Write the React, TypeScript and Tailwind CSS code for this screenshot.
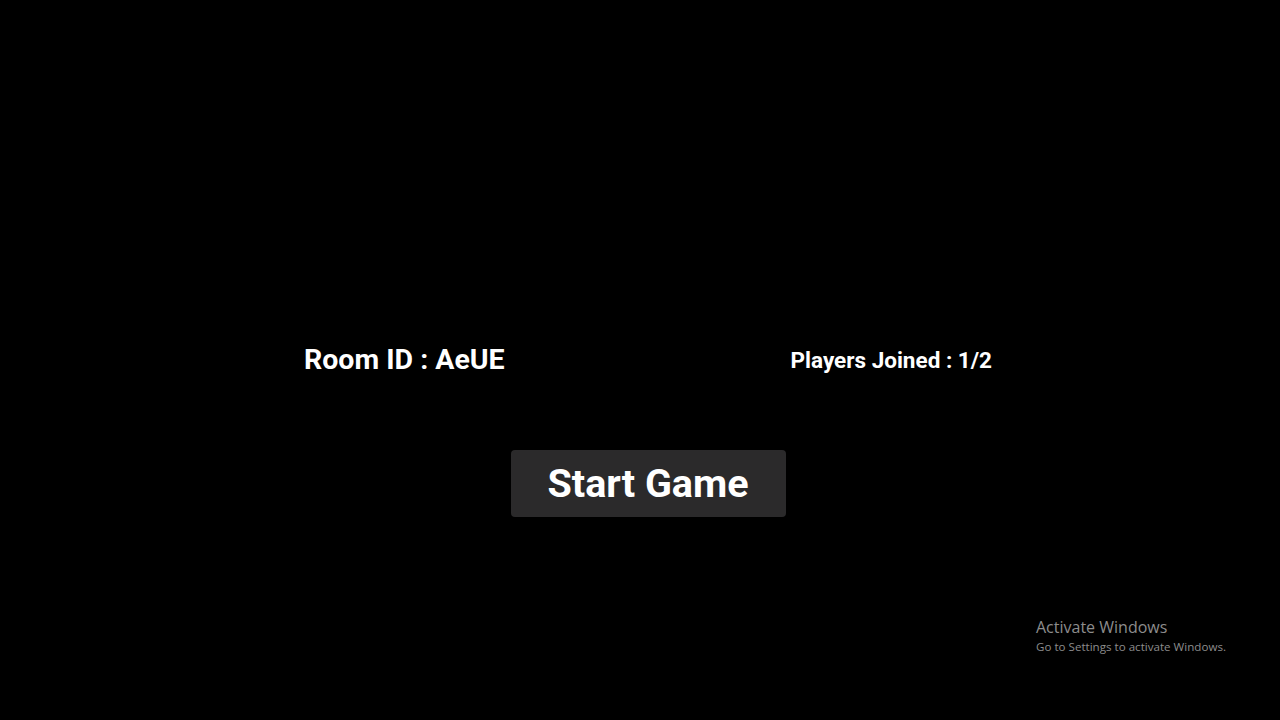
import React from "react";

export default function App() {
  return (
    <div className="relative w-full h-[720px] bg-black text-white font-['Roboto',sans-serif] overflow-hidden">
      <div className="flex flex-col items-center pt-[341px] pl-4">
        <div className="flex w-[688px] items-center justify-between">
          <h2 className="text-[28.5px] font-bold leading-[38px]">Room ID : AeUE</h2>
          <p className="text-[22.5px] font-bold leading-[38px]">Players Joined : 1/2</p>
        </div>
        <button
          type="button"
          className="mt-[71px] w-[275px] h-[67px] rounded bg-[#2b2a2b] text-[39.5px] font-bold text-white"
        >
          Start Game
        </button>
      </div>
      <div className="absolute left-[1036px] top-[616px] font-['Open_Sans',sans-serif] text-[#8c8c8c]">
        <p className="text-[16px] leading-[22px]">Activate Windows</p>
        <p className="text-[11.6px] leading-[18px]">Go to Settings to activate Windows.</p>
      </div>
    </div>
  );
}
